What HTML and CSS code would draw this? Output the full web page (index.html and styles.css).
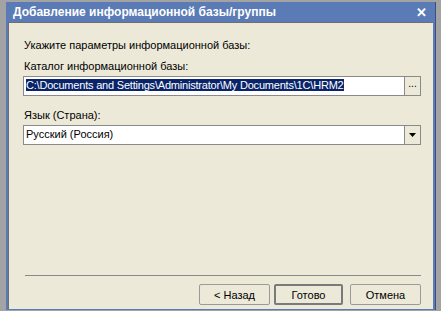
FILE: index.html
```html
<!DOCTYPE html>
<html lang="ru">
<head>
  <meta charset="UTF-8">
  <title>Добавление информационной базы/группы</title>
  <link rel="stylesheet" href="styles.css">
</head>
<body>
  <div class="window">
    <div class="titlebar">
      <span class="title">Добавление информационной базы/группы</span>
      <span class="close">&#x2715;</span>
    </div>
    <div class="content">
      <div class="form">
        <p class="hint">Укажите параметры информационной базы:</p>
        <label class="field-label">Каталог информационной базы:</label>
        <div class="field">
          <div class="field-input"><span class="selected">C:\Documents and Settings\Administrator\My Documents\1C\HRM2</span></div>
          <div class="field-btn dots">...</div>
        </div>
        <label class="field-label">Язык (Страна):</label>
        <div class="field">
          <div class="field-input">Русский (Россия)</div>
          <div class="field-btn arrow">
            <svg width="7" height="4" viewBox="0 0 7 4"><path d="M0 0H7L3.5 4Z" fill="#000"/></svg>
          </div>
        </div>
      </div>
      <div class="footer">
        <div class="separator"></div>
        <div class="buttons">
          <button type="button" class="btn">&lt; Назад</button>
          <button type="button" class="btn default">Готово</button>
          <button type="button" class="btn cancel">Отмена</button>
        </div>
      </div>
    </div>
  </div>
</body>
</html>
```

FILE: styles.css
```css
body {
  margin: 0;
  background: #a3a3a3;
  font-family: "Liberation Sans", Arial, sans-serif;
  font-size: 11px;
  color: #000;
}
.window {
  margin: 2px 0 0 6px;
  width: 430px;
  height: 308px;
  display: flex;
  flex-direction: column;
  background: #5a7bb5;
  box-sizing: border-box;
  border-right: 1px solid #3a4f7e;
}
.titlebar {
  height: 20px;
  flex-shrink: 0;
  display: flex;
  align-items: center;
  justify-content: space-between;
  padding: 0 8px 0 7px;
  color: #fff;
}
.title {
  font-weight: bold;
  font-size: 12px;
}
.close {
  font-weight: bold;
  font-size: 13px;
}
.content {
  flex: 1;
  margin: 0 2px 1px 2px;
  background: #ece9d8;
  border-top: 1px solid #6f6f6f;
  border-left: 1px solid #6f6f6f;
  display: flex;
  flex-direction: column;
  justify-content: space-between;
  padding: 0 12px 4px 14px;
}
.form {
  padding-top: 16px;
}
.hint {
  margin: 0 0 9px 1px;
}
.field-label {
  display: block;
  margin: 0 0 4px 1px;
}
.field {
  display: flex;
  height: 20px;
  box-sizing: border-box;
  border: 1px solid #8a8a8a;
  background: #fff;
  margin-bottom: 13px;
}
.field-input {
  flex: 1;
  padding: 2px 2px 0;
  white-space: nowrap;
  overflow: hidden;
}
.selected {
  background: #0a246a;
  color: #fff;
  letter-spacing: -0.2px;
}
.field-btn {
  width: 15px;
  border-left: 1px solid #8a8a8a;
  background: #ece9d8;
  display: flex;
  align-items: center;
  justify-content: center;
}
.dots {
  font-size: 10px;
  align-items: flex-start;
  line-height: 14px;
}
.separator {
  height: 1px;
  background: #8a8a8a;
  margin: 0 0 8px 2px;
}
.buttons {
  display: flex;
  justify-content: flex-end;
  gap: 4px;
}
.btn {
  width: 71px;
  height: 21px;
  font-family: "Liberation Sans", Arial, sans-serif;
  font-size: 11px;
  background: #ece9d8;
  border: 1px solid #9a9a9a;
  border-radius: 2px;
  padding: 0;
  color: #000;
}
.btn.default {
  width: 69px;
  border: 2px solid #7a7a7a;
}
.btn.cancel {
  margin-left: 3px;
}
```
